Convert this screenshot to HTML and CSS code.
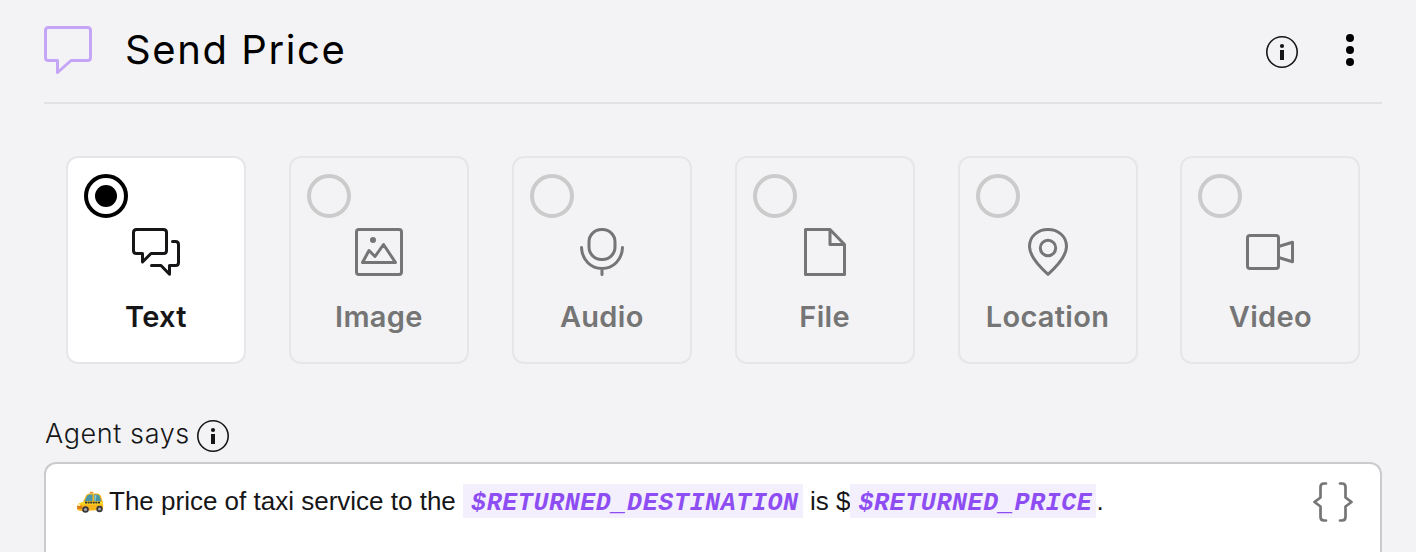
FILE: index.html
```html
<!DOCTYPE html>
<html lang="en">
<head>
<meta charset="utf-8">
<title>Send Price</title>
<link rel="stylesheet" href="styles.css">
</head>
<body>
<main class="panel">
  <header class="header">
    <svg class="header-icon" viewBox="0 0 48 48"><path d="M4.500 1.500H43.500Q46.500 1.500 46.500 4.500V31.500Q46.500 34.500 43.500 34.500H27L13.500 46.500V34.500H4.500Q1.500 34.500 1.500 31.500V4.500Q1.500 1.500 4.500 1.500Z"/></svg>
    <h1 class="title">Send Price</h1>
    <svg class="info" viewBox="0 0 32 32"><circle cx="16" cy="16" r="15.200"/><path d="M14 14h4v10h-4z"/><circle class="dot" cx="16" cy="10" r="2.100"/></svg>
    <svg class="more" viewBox="0 0 8 32"><circle cx="4" cy="4" r="4"/><circle cx="4" cy="16" r="4"/><circle cx="4" cy="28" r="4"/></svg>
  </header>

  <section class="cards">
    <label class="card selected"><span class="radio"></span>
      <svg class="icon" viewBox="0 0 48 48"><path d="M4.500 1.500H31.500Q34.500 1.500 34.500 4.500V22.500Q34.500 25.500 31.500 25.500H19L10.500 34V25.500H4.500Q1.500 25.500 1.500 22.500V4.500Q1.500 1.500 4.500 1.500ZM40.500 13.500H43.500Q46.500 13.500 46.500 16.500V34.500Q46.500 37.500 43.500 37.500H37.500V46.200L29 37.500H19.500"/></svg>
      <span class="name">Text</span></label>
    <label class="card"><span class="radio"></span>
      <svg class="icon" viewBox="0 0 48 48"><rect x="1.500" y="1.500" width="45" height="45" rx="2.500"/><path d="M7.500 34.500L14 22.500L20 28.500L28.500 16.500L40.500 34.500Z"/><circle class="dot" cx="18" cy="12" r="3"/></svg>
      <span class="name">Image</span></label>
    <label class="card"><span class="radio"></span>
      <svg class="icon" viewBox="0 0 48 48"><rect x="11" y="1.500" width="26" height="30" rx="12.500"/><path d="M3.500 19.500C4 32 13 40.500 24 40.500S44 32 44.500 19.500M24 40.500V46.500"/></svg>
      <span class="name">Audio</span></label>
    <label class="card"><span class="radio"></span>
      <svg class="icon" viewBox="0 0 48 48"><path d="M4.500 1.500H29L43.500 16.500V46.500H4.500ZM29 1.500V16.500H43.500"/></svg>
      <span class="name">File</span></label>
    <label class="card"><span class="radio"></span>
      <svg class="icon" viewBox="0 0 48 48"><path d="M24 46.300C12.500 36 5.500 26 5.500 18.500C5.500 8.500 13.500 1.500 24 1.500S42.500 8.500 42.500 18.500C42.500 26 35.500 36 24 46.300Z"/><circle cx="24" cy="20" r="7.700"/></svg>
      <span class="name">Location</span></label>
    <label class="card"><span class="radio"></span>
      <svg class="icon" viewBox="0 0 48 48"><rect x="1.500" y="7.500" width="31" height="33" rx="2.500"/><path d="M32.500 18.500L46.500 14.300V33.700L32.500 29.500"/></svg>
      <span class="name">Video</span></label>
  </section>

  <section class="says">
    <div class="says-label"><span class="says-text">Agent says</span>
      <svg class="info" viewBox="0 0 32 32"><circle cx="16" cy="16" r="15.200"/><path d="M14 14h4v10h-4z"/><circle class="dot" cx="16" cy="10" r="2.100"/></svg>
    </div>
    <div class="editor">
      <svg class="taxi" viewBox="0 0 28 22">
        <path d="M13.500 2.500L14 .8h3l.6 1.700z" fill="#e09a2d"/>
        <path d="M7 11L10 4.500Q11 2.500 14 2.500H21Q24 2.500 25 5L26.500 10Q27.500 12 27 17.500Q26.500 19 24.500 19L5 20Q1 20 1 17Q.8 13 4 12Z" fill="#f8b51b"/>
        <path d="M3 12.500L8 10.700H26.600L27 13.500H3Z" fill="#ffd92a"/>
        <path d="M8.500 10.300L11 5Q11.600 3.700 14 3.600H16.500V10.300ZM18 3.600H21Q23 3.600 23.800 5.500L25.300 10.300H18Z" fill="#4997a8"/>
        <path d="M18.500 4.200H20.500L19.500 10H18.500Z" fill="#91c9cc"/>
        <path d="M9 11.700H24" stroke="#373126" stroke-width="1.700" stroke-dasharray="2 .6"/>
        <path d="M1.200 15.200L6 14.800V17.700H1Z" fill="#da7919"/>
        <circle cx="9.500" cy="18.500" r="3.300" fill="#37363a"/><circle cx="9.500" cy="18.500" r="1.600" fill="#a4a4aa"/>
        <circle cx="23.500" cy="18" r="3.200" fill="#37363a"/><circle cx="23.500" cy="18" r="1.500" fill="#a4a4aa"/>
        <circle cx="3" cy="14" r="1.100" fill="#fff4ba"/>
      </svg>
      <p class="message">The price of taxi service to the <span class="token">$RETURNED_DESTINATION</span> is $<span class="token">$RETURNED_PRICE</span>.</p>
      <svg class="braces" viewBox="0 0 40 40"><path d="M13 1.500H11Q7.500 1.500 7.500 5V15.500L1.500 20L7.500 24.500V35Q7.500 38.500 11 38.500H13M27 1.500H29Q32.500 1.500 32.500 5V15.500L38.500 20L32.500 24.500V35Q32.500 38.500 29 38.500H27"/></svg>
    </div>
  </section>
</main>
</body>
</html>
```
FILE: styles.css
```css
* { box-sizing: border-box; }
body {
  margin: 0;
  background: #f3f3f5;
  font-family: Inter, "Liberation Sans", sans-serif;
}
svg { display: block; flex: none; }
.panel { height: 552px; padding: 0 34px 0 44px; }
.header {
  display: flex;
  align-items: center;
  height: 104px;
  padding: 0 28px 2px 0;
  border-bottom: 2px solid #e2e2e4;
}
.header-icon {
  width: 48px;
  height: 48px;
  fill: none;
  stroke: #c5a5f5;
  stroke-width: 3;
  stroke-linejoin: round;
}
.title {
  flex: 1;
  margin: 0 0 0 33px;
  font-size: 40px;
  line-height: 48px;
  font-weight: 400;
  letter-spacing: 1.600px;
  color: #000;
}
.info { width: 32px; height: 32px; fill: none; stroke: #161618; stroke-width: 1.600; }
.info path, .info .dot { fill: #161618; stroke: none; }
.header .info { margin-top: 3px; }
.more { width: 8px; height: 32px; margin-left: 48px; }
.cards {
  display: flex;
  gap: 42.880px;
  padding: 52px 0 0 22px;
}
.card {
  display: flex;
  flex-direction: column;
  flex: none;
  width: 180px;
  height: 208px;
  padding: 16px;
  border: 2px solid #e6e6e8;
  border-radius: 12px;
  color: #757575;
}
.card.selected { background: #fff; color: #161618; }
.radio {
  display: flex;
  width: 44px;
  height: 44px;
  border: 4px solid #cbcbcb;
  border-radius: 50%;
}
.selected .radio { border-color: #000; }
.selected .radio::after {
  content: "";
  width: 22px;
  height: 22px;
  margin: auto;
  border-radius: 50%;
  background: #000;
}
.icon {
  width: 48px;
  height: 48px;
  margin: 10px auto 0;
  fill: none;
  stroke: currentColor;
  stroke-width: 3;
  stroke-linecap: round;
  stroke-linejoin: round;
}
.icon .dot { fill: currentColor; stroke: none; }
.name {
  margin-top: 23px;
  font-size: 29px;
  line-height: 36px;
  font-weight: 600;
  letter-spacing: .3px;
  text-align: center;
}
.says { padding-top: 56px; }
.says-label { display: flex; align-items: flex-start; height: 42px; }
.says-text {
  width: 153px;
  padding-left: 1px;
  font-size: 27px;
  line-height: 28px;
  font-weight: 300;
  letter-spacing: .6px;
  white-space: nowrap;
  color: #161618;
}
.editor {
  display: flex;
  height: 90px;
  padding: 18px 27px 0 30px;
  border: 2px solid #cbcbcd;
  border-bottom: 0;
  border-radius: 12px 12px 0 0;
  background: #fff;
}
.taxi { width: 28px; height: 22px; margin-top: 9px; }
.message {
  flex: 1;
  margin: 2px 0 0 5px;
  font-family: "Liberation Sans", Arial, sans-serif;
  font-size: 26px;
  line-height: 34px;
  white-space: nowrap;
  color: #161618;
}
.token {
  display: inline-block;
  height: 34px;
  padding: 3px 4px 0 8px;
  vertical-align: top;
  background: #f3effd;
  font-family: "Liberation Mono", monospace;
  font-size: 25px;
  letter-spacing: .6px;
  font-weight: 700;
  font-style: italic;
  color: #8d4df2;
}
.braces {
  width: 40px;
  height: 40px;
  fill: none;
  stroke: #757575;
  stroke-width: 2.700;
  stroke-linecap: round;
  stroke-linejoin: round;
}
```
